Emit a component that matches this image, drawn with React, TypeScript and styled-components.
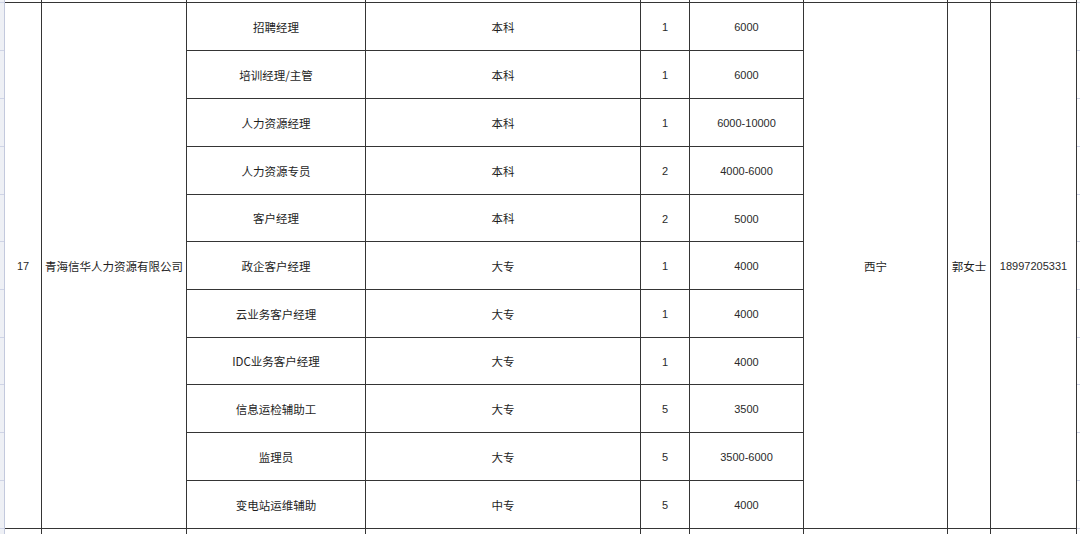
import React from "react";
import styled, { createGlobalStyle } from "styled-components";

const Global = createGlobalStyle`
  html, body { margin: 0; padding: 0; background: #ffffff; }
  body { width: 1080px; height: 534px; overflow: hidden; }
`;

const ROWS = "2px 47px 47px 47px 47px 46px 47px 47px 46px 47px 47px 47px 5px";

const Page = styled.div`
  display: flex;
  width: 1080px;
  height: 534px;
  font-family: "Noto Sans CJK SC", "Liberation Sans", sans-serif;
  color: #1e1e1e;
`;

const Strip = styled.div<{ $w: number; $bg: string; $side: "left" | "right" }>`
  width: ${(p) => p.$w}px;
  display: grid;
  grid-template-rows: ${ROWS};
  row-gap: 1px;
  background: #cfd4e6;
  ${(p) => (p.$side === "left" ? "border-right: 1px solid #c3c9dd;" : "")}
  & > div {
    background: ${(p) => p.$bg};
  }
`;

const Table = styled.div`
  display: grid;
  grid-template-columns: 36px 144px 178px 274px 48px 113px 143px 42px 85px;
  grid-template-rows: ${ROWS};
  gap: 1px;
  padding-right: 1px;
  background: #353535;
`;

const Cell = styled.div<{ $num?: boolean }>`
  background: #ffffff;
  display: flex;
  align-items: center;
  justify-content: center;
  padding-top: 2px;
  box-sizing: border-box;
  white-space: nowrap;
  overflow: hidden;
  font-size: ${(p) => (p.$num ? "11px" : "11.5px")};
  font-family: ${(p) =>
    p.$num
      ? '"Liberation Sans", "Noto Sans CJK SC", sans-serif'
      : '"Noto Sans CJK SC", "Liberation Sans", sans-serif'};
  color: ${(p) => (p.$num ? "#2a2a2a" : "#1e1e1e")};
  line-height: 1;
`;

const Merged = styled(Cell)<{ $col: number }>`
  grid-column: ${(p) => p.$col};
  grid-row: 2 / span 11;
`;

const rows: [string, string, string, string][] = [
  ["招聘经理", "本科", "1", "6000"],
  ["培训经理/主管", "本科", "1", "6000"],
  ["人力资源经理", "本科", "1", "6000-10000"],
  ["人力资源专员", "本科", "2", "4000-6000"],
  ["客户经理", "本科", "2", "5000"],
  ["政企客户经理", "大专", "1", "4000"],
  ["云业务客户经理", "大专", "1", "4000"],
  ["IDC业务客户经理", "大专", "1", "4000"],
  ["信息运检辅助工", "大专", "5", "3500"],
  ["监理员", "大专", "5", "3500-6000"],
  ["变电站运维辅助", "中专", "5", "4000"],
];

const stripCells = Array.from({ length: 13 }, (_, i) => <div key={i} />);
const edgeCells = (k: string) =>
  Array.from({ length: 9 }, (_, i) => <Cell key={k + i} />);

export default function App() {
  return (
    <>
      <Global />
      <Page>
        <Strip $w={4} $bg="#eef0f5" $side="left">
          {stripCells}
        </Strip>
        <Table>
          {edgeCells("t")}
          <Merged $col={1} $num>17</Merged>
          <Merged $col={2}>青海信华人力资源有限公司</Merged>
          <Merged $col={7}>西宁</Merged>
          <Merged $col={8}>郭女士</Merged>
          <Merged $col={9} $num>18997205331</Merged>
          {rows.map(([job, edu, n, pay], i) => (
            <React.Fragment key={i}>
              <Cell>{job}</Cell>
              <Cell>{edu}</Cell>
              <Cell $num>{n}</Cell>
              <Cell $num>{pay}</Cell>
            </React.Fragment>
          ))}
          {edgeCells("b")}
        </Table>
        <Strip $w={3} $bg="#ffffff" $side="right">
          {stripCells}
        </Strip>
      </Page>
    </>
  );
}
